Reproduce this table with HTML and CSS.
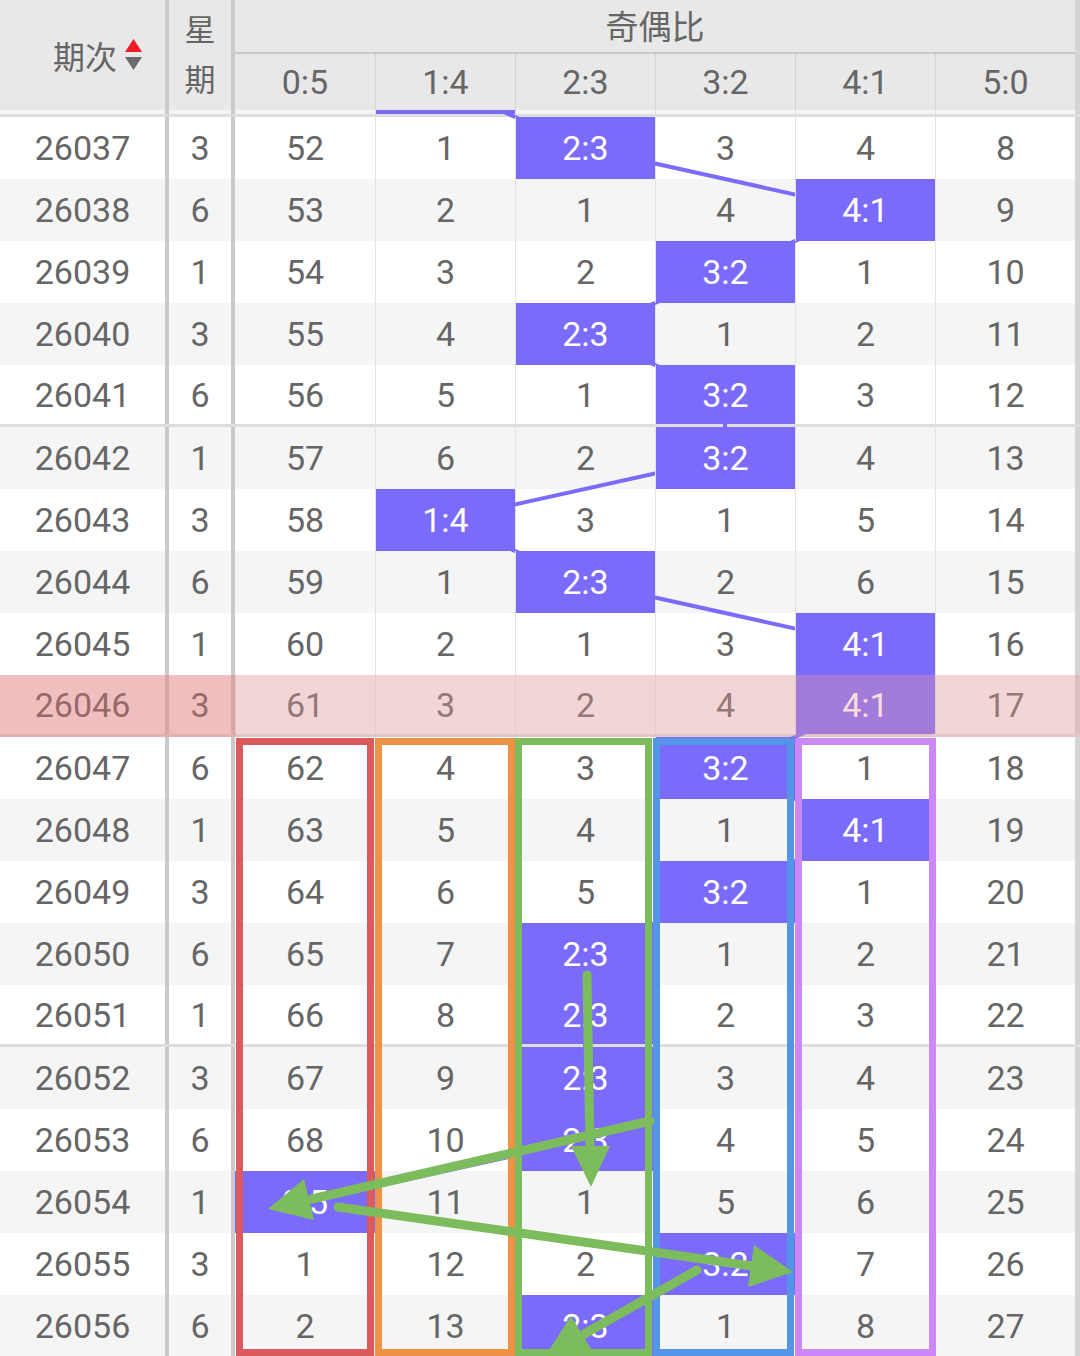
FILE: index.html
```html
<!DOCTYPE html>
<html lang="zh">
<head>
<meta charset="utf-8">
<title>奇偶比走势</title>
<link rel="stylesheet" href="styles.css">
</head>
<body>
<div class="page">
  <div class="head">
    <div class="h-issue"><span>期次</span>
      <svg class="sort" width="17" height="32" viewBox="0 0 17 32"><polygon points="8.5,0 17,13 0,13" fill="#ee1c24"/><polygon points="0,18 17,18 8.5,31" fill="#6a6a6a"/></svg>
    </div>
    <div class="h-week"><span>星</span><span>期</span></div>
    <div class="h-group">
      <div class="h-title">奇偶比</div>
      <div class="h-subs">
        <div class="h-sub">0:5</div><div class="h-sub">1:4</div><div class="h-sub">2:3</div><div class="h-sub">3:2</div><div class="h-sub">4:1</div><div class="h-sub">5:0</div>
      </div>
    </div>
    <div class="h-edge"></div>
  </div>

  <div class="scroll">
    <div class="rows">
      <div class="row sep"><div class="c1"></div><div class="c2"></div><div class="d"></div><div class="d p"></div><div class="d"></div><div class="d"></div><div class="d"></div><div class="d"></div><div class="edge"></div></div>
      <div class="row"><div class="c1">26037</div><div class="c2">3</div><div class="d">52</div><div class="d">1</div><div class="d p">2:3</div><div class="d">3</div><div class="d">4</div><div class="d">8</div><div class="edge"></div></div>
      <div class="row"><div class="c1">26038</div><div class="c2">6</div><div class="d">53</div><div class="d">2</div><div class="d">1</div><div class="d">4</div><div class="d p">4:1</div><div class="d">9</div><div class="edge"></div></div>
      <div class="row"><div class="c1">26039</div><div class="c2">1</div><div class="d">54</div><div class="d">3</div><div class="d">2</div><div class="d p">3:2</div><div class="d">1</div><div class="d">10</div><div class="edge"></div></div>
      <div class="row"><div class="c1">26040</div><div class="c2">3</div><div class="d">55</div><div class="d">4</div><div class="d p">2:3</div><div class="d">1</div><div class="d">2</div><div class="d">11</div><div class="edge"></div></div>
      <div class="row sep"><div class="c1">26041</div><div class="c2">6</div><div class="d">56</div><div class="d">5</div><div class="d">1</div><div class="d p">3:2</div><div class="d">3</div><div class="d">12</div><div class="edge"></div></div>
      <div class="row"><div class="c1">26042</div><div class="c2">1</div><div class="d">57</div><div class="d">6</div><div class="d">2</div><div class="d p">3:2</div><div class="d">4</div><div class="d">13</div><div class="edge"></div></div>
      <div class="row"><div class="c1">26043</div><div class="c2">3</div><div class="d">58</div><div class="d p">1:4</div><div class="d">3</div><div class="d">1</div><div class="d">5</div><div class="d">14</div><div class="edge"></div></div>
      <div class="row"><div class="c1">26044</div><div class="c2">6</div><div class="d">59</div><div class="d">1</div><div class="d p">2:3</div><div class="d">2</div><div class="d">6</div><div class="d">15</div><div class="edge"></div></div>
      <div class="row"><div class="c1">26045</div><div class="c2">1</div><div class="d">60</div><div class="d">2</div><div class="d">1</div><div class="d">3</div><div class="d p">4:1</div><div class="d">16</div><div class="edge"></div></div>
      <div class="row sep hl"><div class="c1">26046</div><div class="c2">3</div><div class="d">61</div><div class="d">3</div><div class="d">2</div><div class="d">4</div><div class="d p">4:1</div><div class="d">17</div><div class="edge"></div></div>
      <div class="row"><div class="c1">26047</div><div class="c2">6</div><div class="d">62</div><div class="d">4</div><div class="d">3</div><div class="d p">3:2</div><div class="d">1</div><div class="d">18</div><div class="edge"></div></div>
      <div class="row"><div class="c1">26048</div><div class="c2">1</div><div class="d">63</div><div class="d">5</div><div class="d">4</div><div class="d">1</div><div class="d p">4:1</div><div class="d">19</div><div class="edge"></div></div>
      <div class="row"><div class="c1">26049</div><div class="c2">3</div><div class="d">64</div><div class="d">6</div><div class="d">5</div><div class="d p">3:2</div><div class="d">1</div><div class="d">20</div><div class="edge"></div></div>
      <div class="row"><div class="c1">26050</div><div class="c2">6</div><div class="d">65</div><div class="d">7</div><div class="d p">2:3</div><div class="d">1</div><div class="d">2</div><div class="d">21</div><div class="edge"></div></div>
      <div class="row sep"><div class="c1">26051</div><div class="c2">1</div><div class="d">66</div><div class="d">8</div><div class="d p">2:3</div><div class="d">2</div><div class="d">3</div><div class="d">22</div><div class="edge"></div></div>
      <div class="row"><div class="c1">26052</div><div class="c2">3</div><div class="d">67</div><div class="d">9</div><div class="d p">2:3</div><div class="d">3</div><div class="d">4</div><div class="d">23</div><div class="edge"></div></div>
      <div class="row"><div class="c1">26053</div><div class="c2">6</div><div class="d">68</div><div class="d">10</div><div class="d p">2:3</div><div class="d">4</div><div class="d">5</div><div class="d">24</div><div class="edge"></div></div>
      <div class="row"><div class="c1">26054</div><div class="c2">1</div><div class="d p">0:5</div><div class="d">11</div><div class="d">1</div><div class="d">5</div><div class="d">6</div><div class="d">25</div><div class="edge"></div></div>
      <div class="row"><div class="c1">26055</div><div class="c2">3</div><div class="d">1</div><div class="d">12</div><div class="d">2</div><div class="d p">3:2</div><div class="d">7</div><div class="d">26</div><div class="edge"></div></div>
      <div class="row"><div class="c1">26056</div><div class="c2">6</div><div class="d">2</div><div class="d">13</div><div class="d p">2:3</div><div class="d">1</div><div class="d">8</div><div class="d">27</div><div class="edge"></div></div>
      <svg class="trend" width="1080" height="1302" viewBox="0 0 1080 1302">
        <polyline points="445,31 585,93 865,155 725,217 585,279 725,341 725,403 445,465 585,527 865,589 865,651 725,713 865,775 725,837 585,899 585,961 585,1023 585,1085 305,1147 725,1209 585,1271" fill="none" stroke="#7b6bfb" stroke-width="4" stroke-linejoin="round"/>
      </svg>
    </div>
  </div>

  <div class="box box-red"></div>
  <div class="box box-orange"></div>
  <div class="box box-green"></div>
  <div class="box box-blue"></div>
  <div class="box box-purple"></div>

  <svg class="arrows" width="1080" height="1356" viewBox="0 0 1080 1356">
    <g stroke="#7dbc5c" stroke-width="9" stroke-linecap="round" fill="none">
      <line x1="587" y1="975" x2="590" y2="1150"/>
      <line x1="650" y1="1121" x2="312" y2="1199"/>
      <line x1="338" y1="1207" x2="752" y2="1266"/>
      <line x1="697" y1="1270" x2="584" y2="1334"/>
    </g>
    <g fill="#7dbc5c">
      <polygon points="571,1146 610,1146 591,1187"/>
      <polygon points="268,1209 314,1220 304,1179"/>
      <polygon points="793,1272 748,1287 754,1245"/>
      <polygon points="544,1358 594,1354 571,1316"/>
    </g>
  </svg>
</div>
</body>
</html>
```

FILE: styles.css
```css
* { box-sizing: border-box; }
html, body { margin: 0; padding: 0; background: #fff; }

.page {
  width: 1080px;
  height: 1356px;
  position: relative;
  overflow: hidden;
  background: #fff;
  color: #666;
  font-family: Roboto, "Noto Sans", "Noto Sans CJK SC", sans-serif;
}

/* header */
.head {
  display: grid;
  grid-template-columns: 169px 66px 840px 5px;
  height: 110px;
  background: #e8e8e8;
}
.h-issue {
  border-right: 4px solid #cacaca;
  display: flex;
  align-items: center;
  justify-content: flex-end;
  gap: 8px;
  padding-right: 23px;
  font-family: "Noto Sans CJK SC", sans-serif;
  font-size: 32px;
}
.sort { display: block; }
.h-week {
  border-right: 4px solid #cacaca;
  display: flex;
  flex-direction: column;
  align-items: center;
  justify-content: center;
  font-family: "Noto Sans CJK SC", sans-serif;
  font-size: 31px;
  line-height: 50px;
  padding-bottom: 4px;
}
.h-group {
  display: grid;
  grid-template-rows: 54px 56px;
}
.h-title {
  border-bottom: 2px solid #c9c9c9;
  display: flex;
  align-items: center;
  justify-content: center;
  font-family: "Noto Sans CJK SC", sans-serif;
  font-size: 33px;
  padding-bottom: 3px;
}
.h-subs {
  display: grid;
  grid-template-columns: repeat(6, 140px);
}
.h-sub {
  display: flex;
  align-items: center;
  justify-content: center;
  font-size: 34px;
}
.h-sub + .h-sub { border-left: 1px solid #d3d3d3; }
.h-edge { background: #d4d4d4; }

/* body */
.scroll {
  height: 1246px;
  overflow: hidden;
}
.rows {
  position: relative;
  z-index: 0;
  margin-top: -55px;
}
.row {
  display: grid;
  grid-template-columns: 169px 66px repeat(6, 140px) 5px;
  height: 62px;
  font-size: 34px;
  background: #fff;
}
.row:nth-child(odd) { background: #f5f5f5; }
.row.sep { border-bottom: 3px solid #dedede; }
.row > div {
  display: flex;
  align-items: center;
  justify-content: center;
}
.c1, .c2 { border-right: 4px solid #cacaca; }
.d + .d { border-left: 1px solid #e3e3e3; }
.p {
  background: #7b6bfb;
  color: #fff;
  position: relative;
  z-index: 1;
}
.edge { background: #d4d4d4; }

.trend {
  position: absolute;
  left: 0;
  top: 0;
  z-index: 0;
}

.hl { position: relative; }
.hl::after {
  content: "";
  position: absolute;
  left: 0;
  right: 0;
  top: 0;
  bottom: -3px;
  z-index: 2;
  background: linear-gradient(to right, rgba(230, 110, 112, 0.4) 0 236px, rgba(236, 154, 156, 0.35) 236px);
}

/* annotations */
.box {
  position: absolute;
  top: 738px;
  height: 618px;
  border: 7px solid;
  z-index: 5;
}
.box-red { left: 236px; width: 138px; border-color: #dc5a5d; }
.box-orange { left: 375px; width: 140px; border-color: #ef9245; }
.box-green { left: 515px; width: 137px; border-color: #7dbc5c; }
.box-blue { left: 653px; width: 141px; border-color: #5595e5; }
.box-purple { left: 795px; width: 141px; border-color: #cb88f6; }

.arrows {
  position: absolute;
  left: 0;
  top: 0;
  z-index: 6;
}
```
